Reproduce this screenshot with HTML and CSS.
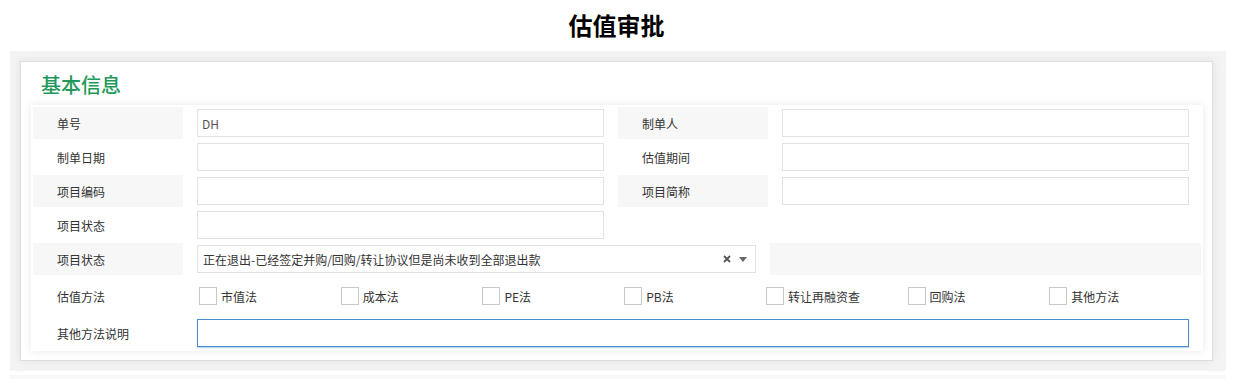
FILE: index.html
```html
<!DOCTYPE html>
<html lang="zh-CN">
<head>
    <meta charset="UTF-8" />
    <title>估值审批</title>
    <link rel="stylesheet" href="styles.css">
</head>
<body>
    <h1 class="page-title">估值审批</h1>
    <div class="section-wrap">
        <div class="card">
            <div class="card-title">基本信息</div>
            <div class="form-grid">
                <div class="lbl shade">单号</div>
                <div class="val"><input class="txt" type="text" value="DH"></div>
                <div class="lbl shade">制单人</div>
                <div class="val"><input class="txt" type="text"></div>

                <div class="lbl">制单日期</div>
                <div class="val"><input class="txt" type="text"></div>
                <div class="lbl">估值期间</div>
                <div class="val"><input class="txt" type="text"></div>

                <div class="lbl shade">项目编码</div>
                <div class="val"><input class="txt" type="text"></div>
                <div class="lbl shade">项目简称</div>
                <div class="val"><input class="txt" type="text"></div>

                <div class="lbl">项目状态</div>
                <div class="val"><input class="txt" type="text"></div>
                <div class="lbl"></div>
                <div class="val"></div>

                <div class="lbl shade">项目状态</div>
                <div class="val span2">
                    <div class="select">
                        <span class="select-text">正在退出-已经签定并购/回购/转让协议但是尚未收到全部退出款</span>
                        <svg class="clear-icon" width="8" height="8" viewBox="0 0 8 8"><path d="M1 1L7 7M7 1L1 7" stroke="#555" stroke-width="1.8"/></svg>
                        <svg class="arrow-icon" width="8" height="5" viewBox="0 0 8 5"><path d="M0 0H8L4 5Z" fill="#666"/></svg>
                    </div>
                </div>
                <div class="lbl shade"></div>

                <div class="lbl">估值方法</div>
                <div class="val span3 checks">
                    <label class="chk"><span class="box"></span>市值法</label>
                    <label class="chk"><span class="box"></span>成本法</label>
                    <label class="chk"><span class="box"></span>PE法</label>
                    <label class="chk"><span class="box"></span>PB法</label>
                    <label class="chk"><span class="box"></span>转让再融资查</label>
                    <label class="chk"><span class="box"></span>回购法</label>
                    <label class="chk"><span class="box"></span>其他方法</label>
                </div>

                <div class="lbl">其他方法说明</div>
                <div class="val span3"><input class="txt focus" type="text"></div>
            </div>
        </div>
    </div>
    <div class="section-next"></div>
</body>
</html>
```

FILE: styles.css
```css
body {
    margin: 0;
    font-family: "Noto Sans CJK SC", "Liberation Sans", sans-serif;
    font-size: 12px;
    color: #333;
    background: #fff;
}
.page-title {
    margin: 0;
    height: 51px;
    line-height: 50px;
    text-align: center;
    font-size: 24px;
    font-weight: bold;
    color: #000;
}
.section-wrap {
    margin: 0 7px 0 10px;
    padding: 10px 13px 10px 10px;
    background: #f4f4f4;
}
.card {
    background: #fff;
    border: 1px solid #dedede;
    box-shadow: 0 0 10px rgba(0, 0, 0, 0.08);
    padding: 0 9px 9px 10px;
}
.card-title {
    padding: 8px 0 5px 10px;
    line-height: 30px;
    font-size: 20px;
    font-weight: 500;
    color: #22995a;
}
.form-grid {
    display: grid;
    grid-template-columns: 150px 1fr 150px 1fr;
    grid-template-rows: repeat(5, 32px) 38px 32px;
    gap: 2px;
    padding: 2px;
    background: #fff;
    box-shadow: 0 0 8px rgba(0, 0, 0, 0.09);
}
.lbl {
    display: flex;
    align-items: center;
    padding-left: 24px;
    color: #333;
}
.shade {
    background: #f7f7f7;
}
.val {
    padding: 2px 12px 0;
}
.span2 {
    grid-column: span 2;
}
.span3 {
    grid-column: span 3;
}
.txt {
    display: block;
    box-sizing: border-box;
    width: 100%;
    height: 28px;
    margin: 0;
    padding: 0 4px;
    border: 1px solid #e2e2e2;
    font-family: inherit;
    font-size: 12px;
    color: #555;
    outline: none;
}
.txt.focus {
    border-color: #4a8ccc;
    box-shadow: 0 1px 1px rgba(74, 140, 204, 0.35);
}
.select {
    display: flex;
    align-items: center;
    box-sizing: border-box;
    height: 28px;
    padding: 0 8px 0 5px;
    border: 1px solid #e2e2e2;
    color: #333;
}
.select-text {
    flex: 1;
}
.clear-icon {
    margin-right: 8px;
}
.checks {
    display: flex;
    align-items: center;
    padding-top: 0;
}
.chk {
    flex: 1;
    display: flex;
    align-items: center;
    padding-left: 2px;
    color: #333;
}
.box {
    box-sizing: border-box;
    width: 18px;
    height: 18px;
    border: 1px solid #c8c8c8;
    margin-right: 4px;
    background: #fff;
}
.section-next {
    margin: 4px 7px 0 10px;
    height: 10px;
    background: #f8f8f8;
}
```
